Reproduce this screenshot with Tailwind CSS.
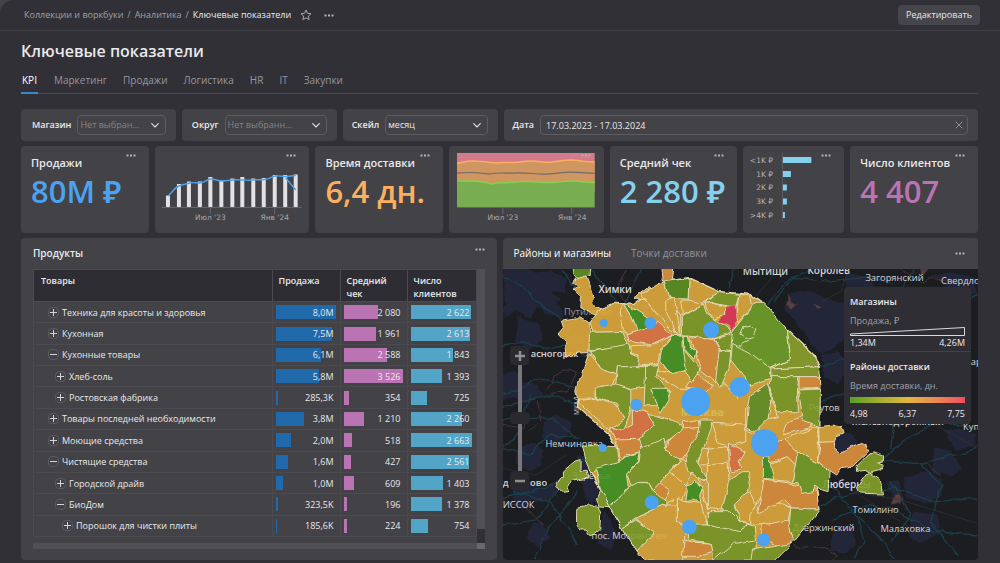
<!DOCTYPE html>
<html lang="ru">
<head>
<meta charset="utf-8">
<meta name="viewport" content="width=device-width, initial-scale=1">
<title>Ключевые показатели</title>
<script src="https://cdn.jsdelivr.net/npm/@tailwindcss/browser@4"></script>
</head>
<body class="bg-[#434249] font-['Open_Sans','Noto_Sans',sans-serif] text-[#e9e9ea]">
<svg class="hidden" aria-hidden="true">
  <symbol id="dots" viewBox="0 0 10 3"><path d="M.5.6h2v2h-2zM4 .6h2v2H4zM7.500.6h2v2h-2z" fill="#b4b4b8"/></symbol>
  <symbol id="chev" viewBox="0 0 8 5"><path d="M.7.700 4 4 7.300.7" fill="none" stroke="#dedee0" stroke-width="1.100" stroke-linecap="round" stroke-linejoin="round"/></symbol>
</svg>
<div class="flex min-h-screen flex-col rounded-tl-[14px] bg-[#313036]">
  <header class="flex h-[31px] items-center border-b border-[#414046] pr-5 pl-6 text-[9px]">
    <nav class="flex items-center gap-1 text-[#a0a0a4]" aria-label="Навигация">
      <a href="#">Коллекции и воркбуки</a><span>/</span><a href="#">Аналитика</a><span>/</span><a href="#" class="text-[#ececee]">Ключевые показатели</a>
    </nav>
    <button class="ml-[9px]" aria-label="В избранное"><svg class="h-3 w-3" viewBox="0 0 12 12"><path d="M6 1 7.500 4.300l3.500.4-2.600 2.400.7 3.500L6 8.900l-3.100 1.700.7-3.500L1 4.700l3.500-.4z" fill="none" stroke="#a8a8ac" stroke-linejoin="round"/></svg></button>
    <button class="ml-3" aria-label="Ещё"><svg class="h-[3px] w-[10px]"><use href="#dots"/></svg></button>
    <button class="ml-auto h-5 rounded bg-[#46454b] px-2 font-medium">Редактировать</button>
  </header>
  <main class="flex flex-1 flex-col pr-[22px] pl-[21px]">
    <h1 class="mt-[9px] text-[16px] leading-[23px] font-semibold">Ключевые показатели</h1>
    <nav class="mt-[6px] flex h-[25px] gap-4 border-b border-[#4b4a50] text-[10px] leading-[22px] text-[#97979b]" aria-label="Вкладки">
      <a href="#" class="-mb-px border-b-2 border-[#3b86c8] px-px text-white">KPI</a><a href="#">Маркетинг</a><a href="#">Продажи</a><a href="#">Логистика</a><a href="#">HR</a><a href="#">IT</a><a href="#">Закупки</a>
    </nav>

    <form class="mt-[15px] grid grid-cols-[155fr_155fr_155fr_475fr] gap-x-[6px] text-[9px]">
      <div class="flex h-8 items-center gap-[6px] rounded-sm bg-[#434247] pr-[10px] pl-[11px]">
        <label for="shop" class="font-semibold">Магазин</label>
        <div class="relative flex-1"><select id="shop" class="block h-5 w-full appearance-none rounded border border-[#5d5c62] px-[2px] text-[#828287]"><option>Нет выбран...</option></select><svg class="pointer-events-none absolute top-2 right-[7px] h-[5px] w-2"><use href="#chev"/></svg></div>
      </div>
      <div class="flex h-8 items-center gap-[6px] rounded-sm bg-[#434247] pr-[10px] pl-[10px]">
        <label for="district" class="font-semibold">Округ</label>
        <div class="relative flex-1"><select id="district" class="block h-5 w-full appearance-none rounded border border-[#5d5c62] px-[2px] text-[#828287]"><option>Нет выбранн...</option></select><svg class="pointer-events-none absolute top-2 right-[7px] h-[5px] w-2"><use href="#chev"/></svg></div>
      </div>
      <div class="flex h-8 items-center gap-[6px] rounded-sm bg-[#434247] pr-[10px] pl-[9px]">
        <label for="scale" class="font-semibold">Скейл</label>
        <div class="relative flex-1"><select id="scale" class="block h-5 w-full appearance-none rounded border border-[#5d5c62] px-[2px]"><option>месяц</option></select><svg class="pointer-events-none absolute top-2 right-[7px] h-[5px] w-2"><use href="#chev"/></svg></div>
      </div>
      <div class="flex h-8 items-center gap-[6px] rounded-sm bg-[#434247] pr-[10px] pl-[9px]">
        <label for="date" class="font-semibold">Дата</label>
        <div class="relative flex-1"><input id="date" type="text" value="17.03.2023 - 17.03.2024" class="block h-5 w-full rounded border border-[#5d5c62] px-[5px]"><button type="button" aria-label="Очистить" class="absolute top-[6px] right-[5px]"><svg class="h-2 w-2" viewBox="0 0 8 8"><path d="m.7.700 6.600 6.600m0-6.600L.7 7.300" stroke="#8c8c91"/></svg></button></div>
      </div>
    </form>

    <section class="mt-[5px] grid h-[87px] grid-cols-[128fr_155fr_128fr_155fr_128fr_101fr_128fr] gap-x-[6px]">
      <article class="relative rounded-sm bg-[#434247] pt-[9px] pl-[10px]">
        <button class="absolute top-2 right-[13px] flex" aria-label="Меню"><svg class="h-[3px] w-[10px]"><use href="#dots"/></svg></button>
        <h2 class="text-[11px] leading-4 font-semibold">Продажи</h2><p class="text-[31px] leading-10 font-semibold whitespace-nowrap text-[#4ba2f0]">80M ₽</p>
      </article>
      <article class="relative rounded-sm bg-[#434247]">
        <button class="absolute top-2 right-[13px] flex" aria-label="Меню"><svg class="h-[3px] w-[10px]"><use href="#dots"/></svg></button>
        <svg class="h-full w-full" viewBox="155 146 155 87" role="img" aria-label="Продажи по месяцам">
          <path d="M166 195.500h4V207h-4zM177 184h4v23h-4zM187 181.500h4V207h-4zM198 181.500h4V207h-4zM208.500 177h4v30h-4zM219.500 180.500h4V207h-4zM230.500 178.500h4V207h-4zM240.500 177h4v30h-4zM251.500 178.500h4V207h-4zM262 178h4v29h-4zM273 175h4v32h-4zM283.500 175h4v32h-4zM294 174.500h4V207h-4z" fill="#e2e1e3"/>
          <path d="M162 207.500h140M210.500 208v6M275 208v6" stroke="#67666c" fill="none"/>
          <path d="M168 196c4-3 6-8 11-10s7-2 11-3 6 0 10 0 7-4 11-4 7 2 11 2 7-.5 11-1 7 0 10 0 7 .5 10 0 8 0 12-.5 7-3 11-3.500 7 .5 11 .5l9-1M286 178l10 12" stroke="#4ba2f0" stroke-width="1.400" fill="none"/>
          <g font-family="DejaVu Sans" font-size="7.500" fill="#a7a7ab" text-anchor="middle"><text x="210.500" y="220">Июл '23</text><text x="275" y="220">Янв '24</text></g>
        </svg>
      </article>
      <article class="relative rounded-sm bg-[#434247] pt-[9px] pl-[10px]">
        <button class="absolute top-2 right-[13px] flex" aria-label="Меню"><svg class="h-[3px] w-[10px]"><use href="#dots"/></svg></button>
        <h2 class="text-[11px] leading-4 font-semibold">Время доставки</h2><p class="text-[31px] leading-10 font-semibold whitespace-nowrap text-[#fbb060]">6,4 дн.</p>
      </article>
      <article class="relative rounded-sm bg-[#434247]">
        <svg class="h-full w-full" viewBox="449 146 155 87" role="img" aria-label="Время доставки по месяцам">
          <path d="M457 153h138v30H457z" fill="#d57a8b"/>
          <path d="M457 163c6 0 8-2 14-2s14 .5 20 1.500 8-.5 16 0 16-1.500 25-1.500 12 2 20 1 14-2 20-2 14 2 23 2v30H457z" fill="#cf9662"/>
          <path d="M457 163c6 0 8-2 14-2s14 .5 20 1.500 8-.5 16 0 16-1.500 25-1.500 12 2 20 1 14-2 20-2 14 2 23 2" fill="none" stroke="#fbb060" stroke-width="1.500"/>
          <path d="M457 181h12c10 0 16 .5 23 3 6-2 12-1 18-1.500s12-1 18-1 16 1.500 26 1 10-1.500 18-1.500 14 2 23 1.500V207H457z" fill="#78ad51"/>
          <path d="M457 181h12c10 0 16 .5 23 3 6-2 12-1 18-1.500s12-1 18-1 16 1.500 26 1 10-1.500 18-1.500 14 2 23 1.500" fill="none" stroke="#82d24b" stroke-width="1.500"/>
          <path d="M457 173c12-1 20-1 33 1 8-2 16-.5 25-1s20 1 30 1 16-2 26-2 14 1 24 1" fill="none" stroke="#716a68" stroke-width="1.200"/>
          <path d="M457 207.500h138M503 208v6M572 208v6" stroke="#67666c"/>
          <g font-family="DejaVu Sans" font-size="7.500" fill="#a7a7ab" text-anchor="middle"><text x="503" y="220">Июл '23</text><text x="572.500" y="220">Янв '24</text></g>
        </svg>
        <button class="absolute top-2 right-[13px] flex" aria-label="Меню"><svg class="h-[3px] w-[10px]"><use href="#dots"/></svg></button>
      </article>
      <article class="relative rounded-sm bg-[#434247] pt-[9px] pl-[10px]">
        <button class="absolute top-2 right-[13px] flex" aria-label="Меню"><svg class="h-[3px] w-[10px]"><use href="#dots"/></svg></button>
        <h2 class="text-[11px] leading-4 font-semibold">Средний чек</h2><p class="text-[31px] leading-10 font-semibold whitespace-nowrap text-[#84d1ee]">2 280 ₽</p>
      </article>
      <article class="relative rounded-sm bg-[#434247]">
        <button class="absolute top-2 right-[13px] flex" aria-label="Меню"><svg class="h-[3px] w-[10px]"><use href="#dots"/></svg></button>
        <svg class="h-full w-full" viewBox="743 146 101 87" role="img" aria-label="Распределение среднего чека">
          <path d="M782.500 153v68" stroke="#5b5a60"/><path d="M783 157h28.500v6H783zM783 171h8v6h-8zM783 184.500h4v6h-4zM783 198.500h4v6h-4zM783 212h2v6h-2z" fill="#84d1ee"/>
          <g font-family="DejaVu Sans" font-size="7.500" fill="#b2b2b6" text-anchor="end"><text x="773" y="163">&lt;1K ₽</text><text x="773" y="177">1K ₽</text><text x="773" y="190.500">2K ₽</text><text x="773" y="204.500">3K ₽</text><text x="773" y="218">&gt;4K ₽</text></g>
        </svg>
      </article>
      <article class="relative rounded-sm bg-[#434247] pt-[9px] pl-[10px]">
        <button class="absolute top-2 right-[13px] flex" aria-label="Меню"><svg class="h-[3px] w-[10px]"><use href="#dots"/></svg></button>
        <h2 class="text-[11px] leading-4 font-semibold">Число клиентов</h2><p class="text-[31px] leading-10 font-semibold whitespace-nowrap text-[#ba74b3]">4 407</p>
      </article>
    </section>

    <section class="mt-[5px] mb-[3px] grid flex-1 grid-cols-2 gap-x-[6px]">
      <article class="rounded-sm bg-[#434247] pr-3 pb-[11px] pl-3">
        <div class="flex h-[31px] items-center justify-between"><h2 class="text-[10px] font-semibold">Продукты</h2><button class="mb-2" aria-label="Меню"><svg class="h-[3px] w-[10px]"><use href="#dots"/></svg></button></div>
        <div class="flex">
          <table class="h-[268px] flex-1 table-fixed border-collapse text-[9px] leading-[13px]">
            <colgroup><col><col class="w-[68px]"><col class="w-[67px]"><col class="w-[69px]"></colgroup>
            <thead class="bg-[#2e2d33] text-left align-top"><tr class="h-8">
              <th class="border border-[#4b4a50] px-[7px] pt-1 font-semibold">Товары</th><th class="border border-[#4b4a50] px-[6px] pt-1 font-semibold">Продажа</th><th class="border border-[#4b4a50] px-[6px] pt-1 font-semibold">Средний чек</th><th class="border border-[#4b4a50] px-[6px] pt-1 font-semibold">Число клиентов</th>
            </tr></thead>
            <tbody id="rows"></tbody>
          </table>
          <div class="flex w-2 flex-col justify-end bg-[#504f55]"><div class="h-2 bg-[#313036]"></div></div>
        </div>
        <div class="flex"><div class="h-[6px] flex-1"></div><div class="w-2 bg-[#313036]"></div></div>
        <div class="flex h-[6px]"><div class="flex-1 bg-[#504f55]"></div><div class="w-2 bg-[#69686d]"></div></div>
      </article>

      <article class="flex flex-col overflow-hidden rounded-sm bg-[#434247]">
        <div class="flex h-[31px] items-center gap-5 pr-[13px] pl-[11px] text-[10px]"><button class="font-medium text-white">Районы и магазины</button><button class="text-[#929297]">Точки доставки</button><button class="ml-auto" aria-label="Меню"><svg class="h-[3px] w-[10px]"><use href="#dots"/></svg></button></div>
        <div class="relative min-h-[291px] flex-1">
          <svg class="absolute inset-0 h-full w-full" viewBox="6 102 1428 873" preserveAspectRatio="xMidYMid slice" role="img" aria-label="Карта районов и магазинов Москвы">
            <filter id="rough" x="-5%" y="-5%" width="110%" height="110%"><feTurbulence type="fractalNoise" baseFrequency=".03" numOctaves="2" seed="4"/><feDisplacementMap in="SourceGraphic" scale="16" xChannelSelector="R" yChannelSelector="G"/></filter>
            <rect x="0" y="90" width="1450" height="900" fill="#1c1d20"/>
            <g fill="#242638" filter="url(#rough)">
              <path d="M6 102h80l25 20 40-5 25 25-20 30 25 20-30 35-40-10-20 30-45-20-35 20zM50 240l60 25 20 50-45 30-40-30zM130 195l50 20 5 30-60-5zM95 115l60-10 45 30-10 40-60-20zM6 420l35-10 25 30 45 10 15 30-50 25-40-20-30 10zM130 560l40-20 40 20-10 45-40 20-35-15zM50 640l50-20 30 30-10 45-40 15-35-25zM40 765l45-25 45 15 25-15 20 30-40 30-45-5-20 30-30-15zM100 860l30 10 20 40-40 25-30-25zM230 660l60 10 10 80-20 55-30-10-5-60-35-10zM310 830l40 60-20 60-40-30z"/>
              <path d="M865 175l60-10 60 30 50 10v100l-30 30-40 20-30-20-25-45-40-40-20-30zM960 360l55-10 20 60-20 35-40-15zM1000 590l50 5 20 20-10 30-40 10-20-20zM1210 730l70-20 40 20 5 50-50 25-60-20zM1300 640l50 10 35 55-30 20-60-15zM1160 740l30-5 20 60-30 20zM1000 880l50-10 15 60-30 25-50-10zM1330 590l50-10 45 20v30l-60 15zM1240 830l70 10 10 60-60 20-40-20zM1300 120l60-10 65 20v50l-80-10zM1030 110l80 20 10 30-80 10z"/>
            </g>
            <g fill="none" stroke="#1d4450" stroke-width="4" filter="url(#rough)" opacity=".85">
              <path d="M6 130l60 20 30 40 80 60 90 100M6 330l60-10 60 20 90-10 50 40M6 475l50-10 50-35 60 10 65 20M6 515l80-20 70-15 70 30M90 480l-40 120-44 40M6 870l100-15 60-80 50-60 60-70M6 640l80 20 60-60 90 10M100 975l40-90 90-120M6 560l60-10 90 0 70 60M40 770l110 30 80 130M270 102l60 80 40 40M420 102l-30 60-20 60M180 102l70 90M6 790l120-30 120-50"/>
              <path d="M750 285l60-90 60-65 60-28M820 200l60-70 120 10 100-15 80 20M1240 102l-40 60 90 40 145-20M960 395l80-25 100-40M960 500l90-30 80-10M990 745l70 90 90 85 30 55M950 820l50-30 80-20 100-10 120 40 130-10M1145 677l120 10 80-25 50-5 40-30M1150 670l70-60 90-50 120 20M1070 850l20 70-30 50M990 860l100-50 80 10 130 70 130 10M1170 740l60 100-60 80M1260 690l60 60-30 110 80 100M1180 560l-10 80M700 102l-15 60"/>
            </g>
            <g fill="none" stroke="#483439" stroke-width="3" filter="url(#rough)">
              <path d="M140 460l20-40 50-20 20 10-30 60-50 5M380 102l-30 60 30 50M110 500l10 60-40 30M6 570l60 10 20-40M6 800l60 10 60 60M880 930l20 10 60-5 40 20 10 10-30 20M1280 690l40 30M1200 102l40 25 30 20 25-20 80 20"/>
              <path d="M860 180l10 20 20 5-15 15-15-10zM940 210l20 5-5 10M1180 780l15-5 5 30-25 5zM1260 102l25 0-20 20z" fill="#59403f"/>
            </g>
            <g fill="none" stroke="#34353a" stroke-width="2"><path d="M990 745l90 30 120 20 230 70M760 190l60-70M960 690l100 80 170 110M1210 440l60 110 160 90M6 700l100 20 90-60M1040 110l-20 60-60 30"/></g>
            <g fill="#d4d4d7" font-family="Open Sans, Noto Sans" font-size="28">
              <text x="190" y="240" fill="#98989c">Путилково</text>
              <text x="90" y="365" font-weight="600">асногорск</text><text x="134" y="636">Немчиновка</text>
              <text x="6" y="753" font-weight="600">д</text><text x="88" y="752" font-weight="600">ово</text><text x="6" y="819">ИССОК</text><text x="272" y="913">пос. Мосрентген</text><text x="215" y="732">Заречье</text>
              <text x="726" y="120" font-size="30" font-weight="600">Мытищи</text><text x="920" y="117" font-size="30" font-weight="600">Королёв</text>
              <text x="1094" y="137">Загорянский</text><text x="1321" y="147">Свердловский</text><text x="924" y="529">Реутов</text>
              <text x="1054" y="571" font-weight="600">Железнодорожный</text><text x="1387" y="586">Купавна</text>
              <text x="965" y="758" font-size="30" font-weight="600">Люберцы</text><text x="1055" y="835">Томилино</text><text x="876" y="887">Дзержинский</text><text x="1139" y="890">Малаховка</text><text x="1410" y="390">ар</text>
              <text transform="rotate(-90 235 540)" x="235" y="540" font-size="20">МКАД</text>
            </g>
            <g stroke="#f7edc0" stroke-width="3" stroke-linejoin="round" filter="url(#rough)" opacity=".9">
              <path fill="#e0aa3c" stroke-width="4" d="M300 222l40-17 60 3 90-68 75-12 90 42 95 8 35 25 75 82 80 75 15 35 2 180 -2 170 -10 80-85 95-50 58H435l-70-98-40-65-25-50-30-60-15-60 90 5v-15l-20-35-95-85 5-30 35-110 3-88z"/>
              <g fill="#e0aa3c">
                <path d="M229 130l30-7 8 22 14 45-6 15 13 10 16 8-19 18-45-26 2-25-22-25 14-8-16-12z"/>
                <path d="M268 262l-28-17-10 6-45 7 6 20-19 22 6 8 17 14-5 20 6 25 14-8 12 6 6-14 37-1z"/>
                <path d="M300 222l40-17 30 5 26 50-30 30-91 2-7-30 17-22z"/><path d="M370 205l25 42 17 40-30 12-17-18-10-50z"/>
                <path d="M400 190l30 0 45 55 50 50 15 5 0-60-35-40-60-45z"/><path d="M420 178l70-38 15 50 20 30 10 80-30-20-50-60z"/>
                <path d="M495 195l25-5 10 50 10 60-15-5-15-45-15-20z"/><path d="M540 195l50 0 15 15-60 32z"/><path d="M565 130l90 40-50 35-43-10z"/>
                <path d="M610 205l30-3 33 10-3 30-25 10-30-25z"/><path d="M715 178l35 5 5 30-40 50-10-20 5-30z"/>
                <path d="M265 352l35 48 47 20-15 40-32-4-17 12v25l-53-1-5-25z"/><path d="M390 332l60-2 62-28-32 42-5 46-65 2 5-32-23-5z"/>
                <path d="M455 400l55 15 47-10 80 45-45 10-60 0-50-30z"/><path d="M230 498l50-8 55 15 35 20 2 30-47 30z"/><path d="M690 375l60 45 0 30-40 40-45-50 15-30z"/>
                <path d="M475 745l70-73 35 28-50 90-125 60 50-50 50-25z"/><path d="M505 710l55 45-30 70"/><path d="M595 740l-5-50 15-45 75-10 5 105-20 85-45-5z"/><path d="M620 640l0 180M600 690l80-5" fill="none"/>
                <path d="M405 850l50 40-45 60 25 28h110l10-108-10-60-60 0z"/><path d="M635 565l100 5 0 50-55 15-25-12z"/><path d="M530 790l20 10 50 5 20 65-60 5-30-15z"/>
                <path d="M700 800l50-35 20 60-20 40-40-10z"/><path d="M753 485l50-35 7 45 20 50-70 15z"/><path d="M843 615l112-40-5 110-60-35z"/><path d="M810 685l50-20 25 25-10 50-55-5z"/><path d="M750 835l30-55 90 42-10 40-110 10z"/>
                <path d="M957 575l40-5 28 8 5 15-22 10-8 19-42 0z"/>
              </g>
              <g fill="#e0933c">
                <path d="M480 95h39l-4 40-30 3z"/><path d="M567 310l35-5 38 10 18 35-12 90-45-35z"/><path d="M558 455l30-40 48 35-20 20z"/>
                <path d="M345 612l65-22 15 60-50 10-18 20z"/><path d="M545 580l52-3-7 33-45 60-25 5-25-25 5-30 25-25z"/><path d="M452 765l25-22 30 23-20 34z"/><path d="M545 560l50-5 5 22-55 5z"/>
                <path d="M845 600l15-40 45-15 25 10 5 22-60 15z"/><path d="M850 612l40 38-5 40-25-25-50 15-15-5-20-30z"/><path d="M790 732l155 25 10 68-85-3-20-27-80 40z"/><path d="M783 870l82-15 10 65-40 20-50-35z"/>
                <path d="M958 622l42-2 3 20 12 12 45-20 20-10 15 8 12 18-47 45-40 5-15 22-55-35z"/><path d="M735 520l40-10 0 90-40-15z"/><path d="M550 918l30 7 50 2 8 25-43 12-50 0z"/>
              </g>
              <g fill="#85a12c">
                <path d="M266 292l99-2 17 35-20 10-97 10z"/><path d="M270 347l115-20 5 30 25 10-5 25-60 5-3 22-47-19z"/><path d="M545 245l60-35 8 25 42 25 40 32-55 18-95-8z"/>
                <path d="M610 205l45-35 60 8-10 38-65-15z"/><path d="M490 140l75-10-3 62-57-2z" fill="#5e9224"/><path d="M350 395l85 0 5 60-50 8-45-10z"/><path d="M435 395l40-3-10 30 40 50-20 40-55 0z"/>
                <path d="M545 340l55 65-25 38-28-38z"/><path d="M655 345l35 5-5 50-25 55-15-20z"/><path d="M640 312l55-20 20 20-20 35-38-4z"/><path d="M750 480l50-35 12 45-10 60-40 40-25-10 5-60z" fill="#6d992b"/>
                <path d="M695 292l25-30 45-60 25 0 70 82 8 88-58 28-60-40-60-20z" fill="#6fa02b"/><path d="M720 300l10-25 20-5 15 15-8 20-22 5zM695 345l50-30" fill="none"/>
                <path d="M860 285l78 75 17 35-145 7 60-30z" fill="#8ca22d"/><path d="M695 325l55 30 60 45 0 30-60 20-60-75z" fill="#7ca32a"/><path d="M810 402l145-7 5 30-150 0z" fill="#8ca22d"/><path d="M810 425l85 0-5 40 3 65-68 0-20-80z"/><path d="M893 465l66-3-2 113-50-20z"/>
                <path d="M283 460l62-10 45 15 0 65-20 55-45 0 45-30-20-50-65-15z"/><path d="M425 530l105 30 15 20-50 40-75 20-10-45 50-20z"/><path d="M245 630l100 5 10 48-70 20-15 15-15-45z"/>
                <path d="M420 640l70-30 5 35 45 30-65 70-20 22-15-25-25 0-20 12-15-40 35-34z"/><path d="M388 755l22-12 30 0 12 22 48 38-95 47-40 30-40-65z" fill="#74a02b"/><path d="M365 880l40-25 55 35-50 60z"/>
                <path d="M600 555l32 0 0 23-22 60-20 45 30 45-10 10-50-30-5-55 40-60z"/><path d="M685 735l40-25 25 0-10 60-40 40 20 50-50-25-5-15z"/>
                <path d="M560 870l60 0 0-40 70 0 30 30 40 10 10 108-130 0-8-50-67-10z"/><path d="M620 870l100 20 20-25M640 975l60-50 60-10" fill="none"/><path d="M890 650l95 55-3 65-17-5-20-15-8 20-32 5-10-35-20 0z" fill="#79a02c"/><path d="M870 822l85 3-75 95-15-50z"/><path d="M755 945l30-5 90-15-55 55h-70z"/>
                <path d="M300 765l25 50-30-2-8-20zM228 820l24-4 13-10 28 9 7 20-3 50-15 12-15 5-15-20-15 0-10-18z"/><path d="M165 755l15-30 8 0 0-17 35-30 18-4 0 35 18 0 5 20-55 10-8 15 5 15-20 3z"/>
                <path d="M1103 660l15-6 30 8 0 15-20 4 20 8-10 15-30 8 30 20 7 45-70-3-8-16 30-40 10-7-10-5-30 3 0-12 15-15z"/><path d="M222 95h48l-2 25-36 10-12-12z" fill="#5e9224"/>
              </g>
              <path fill="#e0933c" d="M895 425h60l3 35-63 3z"/>
              <g fill="#4c9a26"><path d="M370 205l100 60-60 25-15-45z"/><path d="M515 302l32-2 0 40 10 65-47 12-30-38 5-35z"/><path d="M550 305l12 0 8 35 15 8-5 25-28-30z"/><path d="M285 700l70-18 30-20 30-10-5 30-30 33 5 40-60 60-25-50z" /><path d="M785 665l22 0 15 68-37-3z"/><path d="M555 750l20-5 10-10 10 15 12 5-10 25 3 22-25-7-20 5 5-30z"/><path d="M450 460l50 0 5 35-25 40z"/></g>
              <g fill="#e67b48"><path d="M380 300l90-37 45 37-65 30-65-12z"/><path d="M395 525l45 5 20 45-50 35-65 2-22-37 37 13 35-18z"/><path d="M683 625l50 25-18 30 5 25-30 5z"/></g>
              <path fill="#e63c5c" stroke-width="1" d="M672 212l31-5 2 28 5 23-15 34-12-18-30-16 20-18z"/>
            </g>
            <g fill="#dcdcdf" font-family="Open Sans, Noto Sans" font-size="30" font-weight="600"><text x="293" y="174">Химки</text><text x="540" y="544" font-size="33" font-weight="700" fill="#e5d56b" fill-opacity=".5">Москва</text></g>
            <g fill="#4ba2f0"><circle cx="309" cy="264" r="12"/><circle cx="449" cy="264" r="18"/><circle cx="631" cy="285" r="24"/><circle cx="717" cy="456" r="30"/><circle cx="585" cy="500" r="43"/><circle cx="407" cy="509" r="18"/><circle cx="306" cy="639" r="12"/><circle cx="453" cy="802" r="21"/><circle cx="566" cy="876" r="22"/><circle cx="792" cy="624" r="41"/><circle cx="789" cy="915" r="20"/></g>
          </svg>
          <div class="absolute top-[77px] left-[7px] flex flex-col items-center">
            <button class="flex h-[19px] w-[19px] items-center justify-center rounded-sm bg-[#29292e]" aria-label="Приблизить"><svg class="h-[10px] w-[10px]" viewBox="0 0 10 10"><path d="M0 5h10M5 0v10" stroke="#909095" stroke-width="2.500"/></svg></button>
            <input type="range" aria-label="Масштаб" value="50" class="h-[106px] w-5 appearance-none bg-[linear-gradient(to_right,transparent_8px,#77777c_8px,#77777c_12px,transparent_12px)] [writing-mode:vertical-lr] [&::-webkit-slider-thumb]:h-3 [&::-webkit-slider-thumb]:w-5 [&::-webkit-slider-thumb]:appearance-none [&::-webkit-slider-thumb]:rounded-sm [&::-webkit-slider-thumb]:bg-[#29292e]">
            <button class="flex h-[19px] w-[19px] items-center justify-center rounded-sm bg-[#29292e]" aria-label="Отдалить"><svg class="h-[10px] w-[10px]" viewBox="0 0 10 10"><path d="M0 5h10" stroke="#909095" stroke-width="2.500"/></svg></button>
          </div>
          <aside class="absolute top-[18px] right-[7px] w-[127px] rounded-sm bg-[#2f2e34] text-[9px] leading-3">
            <div class="border-b border-[#434247] px-[6px] pt-[9px] pb-[2px]"><h3 class="font-semibold">Магазины</h3><p class="mt-[7px] text-[#a0a0a4]">Продажа, ₽</p>
              <svg class="block h-[9px] w-full" viewBox="0 0 116 9" preserveAspectRatio="none"><path d="M.5 8.500V7L115.500.5v8z" fill="none" stroke="#dcdcde"/></svg>
              <div class="mt-px flex justify-between"><span>1,34M</span><span>4,26M</span></div></div>
            <div class="px-[6px] pt-[9px] pb-1"><h3 class="font-semibold">Районы доставки</h3><p class="mt-[7px] text-[#a0a0a4]">Время доставки, дн.</p>
              <div class="mt-[5px] h-[6px] bg-linear-to-r from-[#53a221] via-[#e2b63b] to-[#ef4b60]"></div>
              <div class="mt-[5px] flex justify-between"><span>4,98</span><span>6,37</span><span>7,75</span></div></div>
          </aside>
        </div>
      </article>
    </section>
  </main>
</div>
<script>
const data = [
  [0,'+','Техника для красоты и здоровья','8,0M',100,'2 080',59,'2 622',99],
  [0,'+','Кухонная','7,5M',94,'1 961',55,'2 613',98],
  [0,'−','Кухонные товары','6,1M',76,'2 588',73,'1 843',69],
  [1,'+','Хлеб-соль','5,8M',73,'3 526',100,'1 393',52],
  [1,'+','Ростовская фабрика','285,3K',4,'354',10,'725',27],
  [0,'+','Товары последней необходимости','3,8M',48,'1 210',34,'2 260',85],
  [0,'+','Моющие средства','2,0M',25,'518',15,'2 663',100],
  [0,'−','Чистящие средства','1,6M',21,'427',12,'2 561',96],
  [1,'+','Городской драйв','1,0M',13,'609',17,'1 403',53],
  [1,'−','БиоДом','323,5K',4,'196',6,'1 378',52],
  [2,'+','Порошок для чистки плиты','185,6K',2,'224',6,'754',28]
];
const pads = ['pl-[14px]', 'pl-[21px]', 'pl-[28px]'];
const fills = ['bg-[#2069ab]', 'bg-[#ba74b3]', 'bg-[#52a5c6]'];
const cell = (text, width, i) => `<td class="border border-[#4b4a50] py-0 pr-1 pl-[3px]"><div class="grid items-center"><div class="h-[14px] [grid-area:1/1] ${fills[i]}" style="width:${width}%"></div><span class="pr-[2px] text-right [grid-area:1/1]">${text}</span></div></td>`;
document.getElementById('rows').innerHTML = data.map(r => `<tr><td class="border border-[#4b4a50] py-0 ${pads[r[0]]}"><div class="flex items-center gap-[3px]"><button class="flex h-[11px] w-[11px] items-center justify-center rounded-sm border border-[#59585e]" aria-label="${r[1] === '+' ? 'Развернуть' : 'Свернуть'}"><svg class="h-[7px] w-[7px] shrink-0" viewBox="0 0 7 7"><path d="${r[1] === '+' ? 'M0 3.500h7M3.500 0v7' : 'M0 3.500h7'}" stroke="#d4d4d6"/></svg></button><span>${r[2]}</span></div></td>${cell(r[3], r[4], 0)}${cell(r[5], r[6], 1)}${cell(r[7], r[8], 2)}</tr>`).join('');
</script>
</body>
</html>
